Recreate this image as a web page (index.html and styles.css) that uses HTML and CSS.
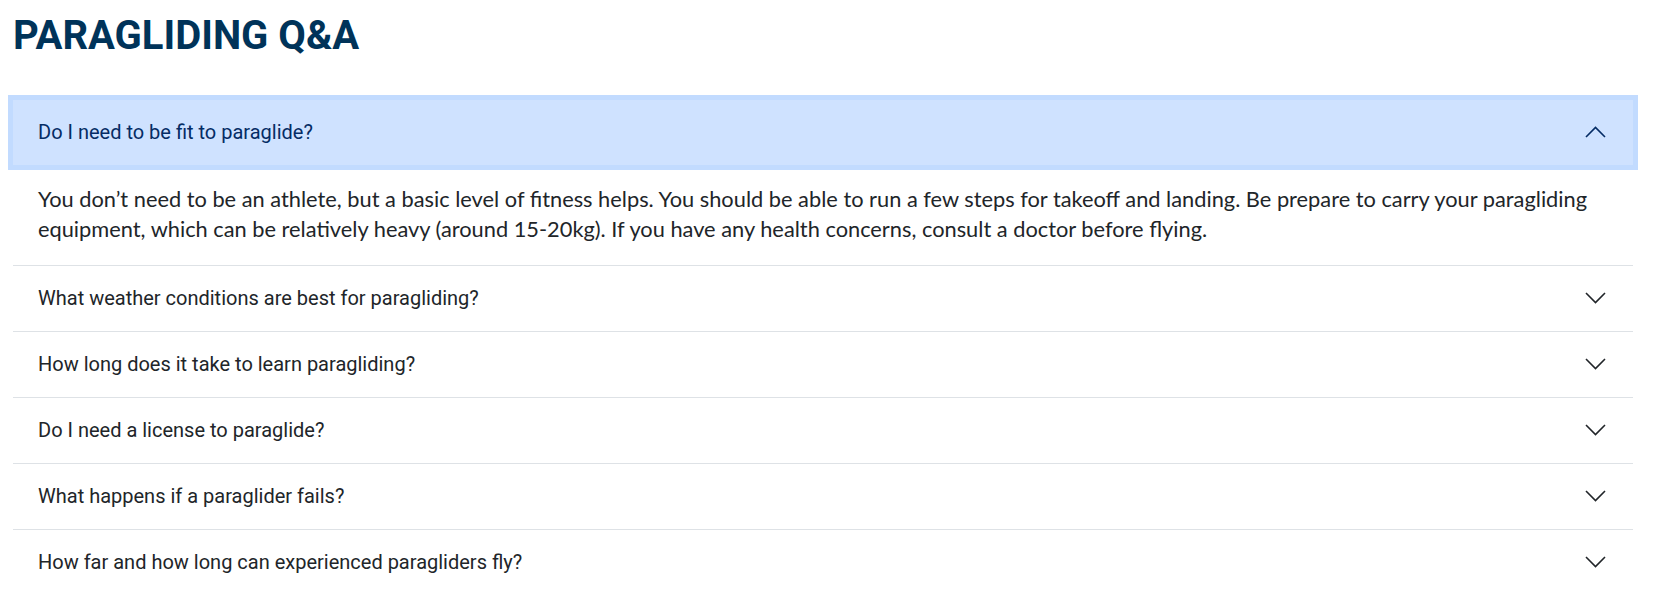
FILE: index.html
```html
<!DOCTYPE html>
<html lang="en">
<head>
<meta charset="utf-8">
<title>Paragliding Q&amp;A</title>
<link rel="stylesheet" href="styles.css">
</head>
<body>
<main class="page">
  <h1 class="title">PARAGLIDING Q&amp;A</h1>
  <div class="accordion">
    <div class="item">
      <div class="question active">
        <span>Do I need to be fit to paraglide?</span>
        <svg class="chev" width="21" height="12" viewBox="0 0 21 12"><polyline points="1,11 10.5,1.5 20,11" /></svg>
      </div>
      <div class="answer">You don’t need to be an athlete, but a basic level of fitness helps. You should be able to run a few steps for takeoff and landing. Be prepare to carry your paragliding equipment, which can be relatively heavy (around 15-20kg). If you have any health concerns, consult a doctor before flying.</div>
    </div>
    <div class="item">
      <div class="question">
        <span>What weather conditions are best for paragliding?</span>
        <svg class="chev" width="21" height="12" viewBox="0 0 21 12"><polyline points="1,1 10.5,10.5 20,1" /></svg>
      </div>
    </div>
    <div class="item">
      <div class="question">
        <span>How long does it take to learn paragliding?</span>
        <svg class="chev" width="21" height="12" viewBox="0 0 21 12"><polyline points="1,1 10.5,10.5 20,1" /></svg>
      </div>
    </div>
    <div class="item">
      <div class="question">
        <span>Do I need a license to paraglide?</span>
        <svg class="chev" width="21" height="12" viewBox="0 0 21 12"><polyline points="1,1 10.5,10.5 20,1" /></svg>
      </div>
    </div>
    <div class="item">
      <div class="question">
        <span>What happens if a paraglider fails?</span>
        <svg class="chev" width="21" height="12" viewBox="0 0 21 12"><polyline points="1,1 10.5,10.5 20,1" /></svg>
      </div>
    </div>
    <div class="item">
      <div class="question">
        <span>How far and how long can experienced paragliders fly?</span>
        <svg class="chev" width="21" height="12" viewBox="0 0 21 12"><polyline points="1,1 10.5,10.5 20,1" /></svg>
      </div>
    </div>
  </div>
</main>
</body>
</html>
```

FILE: styles.css
```css
html, body {
  margin: 0;
  padding: 0;
  background: #ffffff;
}

.page {
  padding: 13px 29px 0 13px;
  font-family: Roboto, "Liberation Sans", sans-serif;
  color: #212529;
}

.title {
  margin: 0 0 41px;
  font-family: Roboto, "Liberation Sans", sans-serif;
  font-weight: 700;
  font-size: 40px;
  line-height: 46px;
  color: #003359;
}

.accordion {
  display: flex;
  flex-direction: column;
}

.item {
  border-bottom: 1px solid #dee2e6;
}

.item:last-child {
  border-bottom: 0;
}

.question {
  position: relative;
  z-index: 1;
  display: flex;
  align-items: center;
  justify-content: space-between;
  padding: 17px 27px 18px 25px;
  font-size: 20px;
  line-height: 30px;
  color: #212529;
}

.question.active {
  background: #cfe2ff;
  color: #052c65;
  box-shadow: 0 0 0 5px #c2dbff;
}

.chev {
  display: block;
  flex: none;
  fill: none;
  stroke: #212529;
  stroke-width: 1.6;
}

.question.active .chev {
  stroke: #052c65;
}

.answer {
  padding: 19px 25px 21px;
  font-family: Lato, "Open Sans", sans-serif;
  font-size: 21.8px;
  line-height: 30px;
  color: #212529;
}
```
